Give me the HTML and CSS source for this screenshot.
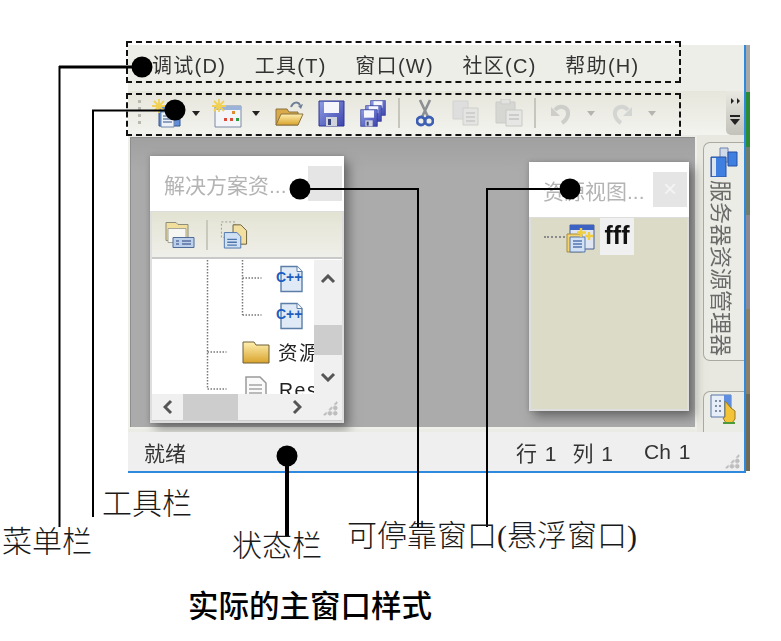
FILE: index.html
```html
<!DOCTYPE html>
<html lang="zh-CN">
<head>
<meta charset="utf-8">
<title>实际的主窗口样式</title>
<link rel="stylesheet" href="styles.css">
</head>
<body>
<svg class="defs" width="0" height="0" aria-hidden="true">
  <defs>
    <linearGradient id="gBlue" x1="0" y1="0" x2="1" y2="1"><stop offset="0" stop-color="#8f9fe6"/><stop offset="1" stop-color="#3d44ad"/></linearGradient>
    <linearGradient id="gFold" x1="0" y1="0" x2="0" y2="1"><stop offset="0" stop-color="#fff0b0"/><stop offset="1" stop-color="#d9a32c"/></linearGradient>
    <symbol id="cpp" viewBox="0 0 28 28">
      <path d="M5 1.500h16l5 5v20H5z" fill="#dfeaf6" stroke="#5b7ea8" stroke-width="1.400"/>
      <path d="M21 1.500v5h5" fill="#fff" stroke="#5b7ea8" stroke-width="1"/>
      <text x="0" y="17" class="cpp-text">C++</text>
    </symbol>
    <symbol id="floppy" viewBox="0 0 27 27">
      <path d="M1 1h25v25H1z" fill="url(#gBlue)" stroke="#2d3590"/>
      <path d="M6 2h15v11H6z" fill="#f4f6fb"/>
      <path d="M8 17h11v9H8z" fill="#cfd3dc"/>
      <path d="M10 19h3v6h-3z" fill="#39457a"/>
    </symbol>
  </defs>
</svg>

<main class="app">
  <nav class="menubar">
    <span class="menu-item">调试(D)</span>
    <span class="menu-item">工具(T)</span>
    <span class="menu-item">窗口(W)</span>
    <span class="menu-item">社区(C)</span>
    <span class="menu-item">帮助(H)</span>
  </nav>

  <div class="toolbar">
    <span class="grip"></span>
    <svg class="ic ic-new" viewBox="0 0 30 30"><path d="M7 8h21v20H7z" fill="#5f8fd8" stroke="#35558f"/><path d="M9 14h13v15H9z" fill="#eef2f8" stroke="#6d86aa"/><path d="M11 18h9M11 21h9M11 24h9" stroke="#6d86aa" stroke-width="1.400"/><path d="M7 1v14M0 8h14M2 3l10 10M12 3L2 13" stroke="#f2d054" stroke-width="1.800"/></svg>
    <span class="drop"></span>
    <svg class="ic ic-add" viewBox="0 0 30 30"><path d="M3 8h26v21H3z" fill="#f3f5f8" stroke="#7c8aa5"/><path d="M3 8h26v4H3z" fill="#9bb2d9"/><path d="M20 13h3v3h-3z" fill="#e08b32"/><path d="M12 20h3v3h-3z" fill="#d94c3a"/><path d="M18 20h3v3h-3z" fill="#d94c3a"/><path d="M24 20h3v3h-3z" fill="#2f9a3f"/><path d="M7 1v13M0 8h14M2 3l10 10M12 3L2 13" stroke="#f2d054" stroke-width="1.800"/></svg>
    <span class="drop drop-b"></span>
    <svg class="ic ic-open" viewBox="0 0 30 28"><path d="M2 10h11l2 3h9v13H2z" fill="#d9a94a" stroke="#8a7240"/><path d="M2 26l5-11h22l-5 11z" fill="url(#gFold)" stroke="#8a7240"/><path d="M17 8c2-5 7-6 9-2" fill="none" stroke="#6f7f96" stroke-width="2"/><path d="M29 5l-2 5-3-3z" fill="#6f7f96"/></svg>
    <svg class="ic ic-save"><use href="#floppy"/></svg>
    <svg class="ic ic-all" viewBox="0 0 27 27"><use href="#floppy" x="10" y="0" width="16" height="16"/><use href="#floppy" x="5" y="5" width="17" height="17"/><use href="#floppy" x="0" y="9" width="18" height="18"/></svg>
    <span class="sep"></span>
    <svg class="ic ic-cut" viewBox="0 0 18 28"><path d="M4 1l8 17M14 1L6 18" stroke="#8c8f94" stroke-width="2.600"/><circle cx="5" cy="22" r="4" fill="none" stroke="#3d5fb4" stroke-width="2.800"/><circle cx="13" cy="22" r="4" fill="none" stroke="#3d5fb4" stroke-width="2.800"/></svg>
    <svg class="ic ic-copy" viewBox="0 0 30 26"><path d="M2 1h15v18H2z" fill="#dedede" stroke="#d2d2d0"/><path d="M12 8h15v17H12z" fill="#e4e4e2" stroke="#cfcfcc"/><path d="M15 13h9M15 17h9M15 21h9" stroke="#c8c8c6" stroke-width="1.500"/></svg>
    <svg class="ic ic-paste" viewBox="0 0 30 28"><path d="M2 3h19v21H2z" fill="#d6d6d3" stroke="#cbcbc8"/><path d="M7 0h9v5H7z" fill="#e2e2df" stroke="#cbcbc8"/><path d="M12 11h16v16H12z" fill="#e6e6e4" stroke="#c8c8c5"/><path d="M15 16h10M15 20h10" stroke="#c4c4c0" stroke-width="1.500"/></svg>
    <span class="sep sep-b"></span>
    <svg class="ic ic-undo" viewBox="0 0 22 24"><path d="M1 6v9h9z" fill="#cdcdca"/><path d="M5 9c5-6 14-3 13 5-1 4-3 6-6 8" fill="none" stroke="#cdcdca" stroke-width="4"/></svg>
    <span class="drop off-drop"></span>
    <svg class="ic ic-redo" viewBox="0 0 22 24"><path d="M21 6v9h-9z" fill="#d3d5d3"/><path d="M17 9C12 3 3 6 4 14c1 4 3 6 6 8" fill="none" stroke="#d3d5d3" stroke-width="4"/></svg>
    <span class="drop off-drop drop-c"></span>
    <div class="overflow">
      <span class="chev"></span>
      <span class="chev chev-b"></span>
      <span class="overflow-bar"></span>
      <span class="overflow-tri"></span>
    </div>
  </div>

  <div class="workarea">
    <section class="client">
      <article class="float float-sln">
        <header class="float-head">
          <span class="float-title">解决方案资...</span>
          <span class="float-btn"></span>
        </header>
        <div class="sln-tools">
          <svg class="tool-ic" viewBox="0 0 30 28"><path d="M1 2h10l2 2h10v16H1z" fill="#f1dd9c" stroke="#8d8d7c"/><path d="M3 8h18v14H3z" fill="#f6f6f2" stroke="#a5a598"/><path d="M8 17h21v10H8z" fill="#bcd0ea" stroke="#4e6b9c"/><path d="M11 20h3v1h-3zM11 23h3v1h-3zM17 20h9v1h-9zM17 23h9v1h-9z" fill="#24417c"/></svg>
          <span class="tool-sep"></span>
          <svg class="tool-ic" viewBox="0 0 30 30"><path d="M2 2h14v16H2z" fill="none" stroke="#999" stroke-dasharray="2 2"/><path d="M14 5h8l6 6v14H14z" fill="#f3dfa0" stroke="#6a5f3c"/><path d="M5 13h13l4 4v12H5z" fill="#cfe0f3" stroke="#4f74ac"/><path d="M8 20h10M8 23h10M8 26h10" stroke="#4f74ac" stroke-width="1.400"/></svg>
        </div>
        <div class="sln-body">
          <div class="tree">
            <svg class="guides" width="162" height="132"><path d="M55.500 0v129M55.500 129h19M55.500 92h19M90.500 0v55M90.500 18h19M90.500 55h19" fill="none" stroke="#777" stroke-dasharray="1.500 1.500" stroke-width="1.500"/></svg>
            <div class="row row-cpp"><svg class="ic-cpp"><use href="#cpp"/></svg></div>
            <div class="row row-cpp"><svg class="ic-cpp"><use href="#cpp"/></svg></div>
            <div class="row row-file">
              <svg class="ic-file" viewBox="0 0 28 23"><path d="M1 4V1h11l2 3h13v18H1z" fill="url(#gFold)" stroke="#6d5f37"/></svg>
              <span class="file-name">资源</span>
            </div>
            <div class="row row-file">
              <svg class="ic-file ic-doc" viewBox="0 0 24 28"><path d="M2 1h14l6 6v20H2z" fill="#fafafa" stroke="#9a9a9a" stroke-width="1.500"/><path d="M5 9h13M5 13h13M5 17h13M5 21h13" stroke="#a5a5a5" stroke-width="1.500"/></svg>
              <span class="file-name">Res</span>
            </div>
          </div>
          <div class="vscroll">
            <svg class="arrow" viewBox="0 0 16 10"><path d="M2 8l6-6 6 6" fill="none" stroke="#555" stroke-width="3"/></svg>
            <span class="vthumb"></span>
            <svg class="arrow arrow-down" viewBox="0 0 16 10"><path d="M2 2l6 6 6-6" fill="none" stroke="#555" stroke-width="3"/></svg>
          </div>
        </div>
        <div class="hscroll">
          <svg class="arrow-h" viewBox="0 0 10 16"><path d="M8 2L2 8l6 6" fill="none" stroke="#555" stroke-width="3"/></svg>
          <span class="hthumb"></span>
          <svg class="arrow-h arrow-r" viewBox="0 0 10 16"><path d="M2 2l6 6-6 6" fill="none" stroke="#555" stroke-width="3"/></svg>
          <span class="sizegrip"></span>
        </div>
      </article>

      <article class="float float-res">
        <header class="float-head">
          <span class="float-title">资源视图...</span>
          <span class="float-btn float-x">×</span>
        </header>
        <div class="res-body">
          <span class="res-dots"></span>
          <svg class="res-ic" viewBox="0 0 30 30"><path d="M5 2h24v24H5z" fill="#dfe6f2" stroke="#475c96"/><path d="M5 2h24v5H5z" fill="#3c62c4"/><path d="M2 11h15v18H2z" fill="#f4d36e" stroke="#a98d3c"/><path d="M5 14h15v15H5z" fill="#d3e1f4" stroke="#5476ae"/><path d="M8 18h9M8 21h9M8 24h9" stroke="#5476ae" stroke-width="1.400"/><path d="M16 5v9M12 9.500h9M24 9v8M20 13h8" stroke="#f1cf3c" stroke-width="2.400"/></svg>
          <span class="res-name">fff</span>
        </div>
      </article>
    </section>

    <aside class="sidebar">
      <div class="tab tab-server">
        <svg class="tab-ic" viewBox="0 0 28 30"><path d="M10 1h8v14h-8z" fill="#cfd9ea" stroke="#6c83ad"/><path d="M18 5h9v14h-9z" fill="#3f7fe0" stroke="#27509e"/><path d="M1 10h15v20H1z" fill="#3f7fe0" stroke="#27509e"/><path d="M2 11h4v18H2z" fill="#dbe4ee"/></svg>
        <span class="tab-text">服务器资源管理器</span>
      </div>
      <div class="tab tab-tool">
        <svg class="tab-ic2" viewBox="0 0 28 32"><path d="M1 2h20v22H1z" fill="#e8eef7" stroke="#5574a8"/><path d="M14 2h7v22h-7z" fill="#5f8ee0"/><path d="M5 7h2v2H5zM9 7h2v2H9zM5 12h2v2H5zM9 12h2v2H9zM5 17h2v2H5zM9 17h2v2H9z" fill="#7d8ea8"/><path d="M15 8l6 7 4 3v8l-3 4h-6l-3-5 2-1z" fill="#f3c338" stroke="#9a7a1d"/><path d="M13 29h12v2H13z" fill="#4d9a3a"/></svg>
      </div>
    </aside>
  </div>

  <footer class="statusbar">
    <span class="status-ready">就绪</span>
    <span class="status-cell status-line">行 1</span>
    <span class="status-cell status-col">列 1</span>
    <span class="status-cell status-ch">Ch 1</span>
    <span class="sizegrip sizegrip-main"></span>
  </footer>
  <span class="edge"></span>
  <span class="backdrop"></span>
</main>

<div class="dash dash-menu"></div>
<div class="dash dash-tool"></div>

<svg class="callouts" width="781" height="641" aria-hidden="true">
  <g fill="none" stroke="#000">
    <path d="M142 67H59.500V527" stroke-width="2"/>
    <path d="M59 67h83" stroke-width="3"/>
    <path d="M175 110.500H93V517" stroke-width="2"/>
    <path d="M287 456v80" stroke-width="4"/>
    <path d="M300 189h118v338" stroke-width="2"/>
    <path d="M570 189h-83v338" stroke-width="2"/>
  </g>
  <g fill="#000">
    <circle cx="142" cy="67" r="10.500"/>
    <circle cx="175" cy="110" r="10.500"/>
    <circle cx="287" cy="456" r="10.500"/>
    <circle cx="300" cy="189" r="10.500"/>
    <circle cx="570" cy="189" r="10.500"/>
  </g>
</svg>

<span class="label label-menu">菜单栏</span>
<span class="label label-tool">工具栏</span>
<span class="label label-status">状态栏</span>
<span class="label label-dock">可停靠窗口(悬浮窗口)</span>
<h1 class="caption">实际的主窗口样式</h1>
</body>
</html>
```

FILE: styles.css
```css
* { box-sizing: border-box; }
html, body { margin: 0; padding: 0; }
body {
  width: 781px;
  height: 641px;
  position: relative;
  overflow: hidden;
  background: #fff;
  font-family: "Liberation Sans", "Noto Sans CJK SC", sans-serif;
}
.defs { position: absolute; }
.app {
  position: absolute;
  left: 128px;
  top: 45px;
  width: 618px;
  height: 428px;
  display: flex;
  flex-direction: column;
  background: #ececE6;
  color: #333;
  border-bottom: 2px solid #2f8ade;
}
.edge {
  position: absolute;
  right: 0;
  top: 0;
  bottom: -2px;
  width: 2px;
  background: #2f8ade;
}
.backdrop {
  position: absolute;
  left: 100%;
  top: 0;
  bottom: 0;
  width: 4px;
  background: linear-gradient(#a8a8a6 0 11%, #2b8a33 11% 24%, #6f7f6c 24% 40%, #8f8a92 40% 62%, #8c8066 62% 82%, #6f6a55 82%);
}

/* menu */
.menubar {
  height: 46px;
  flex: none;
  display: flex;
  align-items: center;
  padding: 0 0 8px 24px;
  background: #eeeee9;
  font-size: 20px;
  letter-spacing: 1.300px;
  filter: blur(.4px);
}
.menu-item { margin-right: 28.500px; white-space: nowrap; }

/* toolbar */
.toolbar {
  height: 44px;
  flex: none;
  display: flex;
  align-items: center;
  position: relative;
  background: linear-gradient(#e6e6dc, #f3f3ef);
  filter: blur(.4px);
}
.grip {
  width: 3px;
  height: 26px;
  margin-left: 10px;
  background: repeating-linear-gradient(#b9b9b0 0 3px, transparent 3px 7px);
}
.ic { display: block; flex: none; }
.ic-new { width: 30px; height: 30px; margin-left: 11px; }
.drop {
  width: 0;
  height: 0;
  flex: none;
  border: 4.500px solid transparent;
  border-top: 5px solid #222;
  border-bottom: 0;
  margin-left: 10px;
}
.ic-add { width: 30px; height: 30px; margin-left: 12px; }
.drop-b { margin-left: 10px; }
.ic-open { width: 30px; height: 28px; margin-left: 14px; }
.ic-save { width: 27px; height: 27px; margin-left: 14px; }
.ic-all { width: 27px; height: 27px; margin-left: 15px; }
.sep { width: 2px; height: 30px; background: #c6c6bc; flex: none; margin-left: 11px; }
.ic-cut { width: 18px; height: 28px; margin-left: 16px; }
.ic-copy { width: 30px; height: 26px; margin-left: 17px; }
.ic-paste { width: 30px; height: 28px; margin-left: 13px; }
.sep-b { margin-left: 10px; }
.ic-undo { width: 22px; height: 24px; margin-left: 14px; }
.off-drop { border-top-color: #b4b4b0; margin-left: 15px; }
.ic-redo { width: 22px; height: 24px; margin-left: 16px; }
.drop-c { margin-left: 15px; }
.overflow {
  position: absolute;
  right: 2px;
  top: 0;
  width: 18px;
  height: 44px;
  background: linear-gradient(#e9e9e2, #d0d0c8 60%, #c3c3bb);
  border-radius: 0 0 0 5px;
}
.chev {
  position: absolute;
  left: 5px;
  top: 7px;
  border: 3px solid transparent;
  border-left: 3px solid #222;
  border-right: 0;
}
.chev-b { left: 11px; }
.overflow-bar {
  position: absolute;
  left: 4px;
  top: 24px;
  width: 10px;
  height: 2px;
  background: #222;
}
.overflow-tri {
  position: absolute;
  left: 4px;
  top: 28px;
  border: 5px solid transparent;
  border-top: 6px solid #222;
  border-bottom: 0;
}

/* workarea */
.workarea {
  flex: 1;
  display: flex;
  min-height: 0;
}
.client {
  position: relative;
  width: 569px;
  margin-top: 2px;
  margin-bottom: 3px;
  background: linear-gradient(#a0a0a0, #ababab 12%);
  border-left: 2px solid #f0f0ea;
  border-right: 2px solid #f0f0ea;
  border-bottom: 2px solid #f0f0ea;
  box-shadow: inset 0 1px 0 #8f8f8f, inset 1px 0 0 #8f8f8f;
}
.sidebar {
  flex: 1;
  padding: 7px 2px 0 6px;
  display: flex;
  flex-direction: column;
  background: #e8e8e1;
}
.tab {
  border: 1px solid #a9a9a0;
  border-right: 0;
  border-radius: 7px 0 0 7px;
  background: #ecece6;
  display: flex;
  flex-direction: column;
  align-items: center;
  filter: blur(.3px);
}
.tab-server { height: 219px; padding-top: 4px; flex: none; }
.tab-ic { width: 28px; height: 30px; flex: none; }
.tab-text {
  writing-mode: vertical-rl;
  text-orientation: sideways;
  font-size: 22px;
  line-height: 24px;
  margin: 3px 8px 0 0;
  white-space: nowrap;
  color: #6a6a6a;
}
.tab-tool { margin-top: 30px; flex: 1; padding-top: 1px; border-bottom: 0; border-radius: 7px 0 0 0; }
.tab-ic2 { width: 28px; height: 32px; }

/* floating windows */
.float {
  position: absolute;
  display: flex;
  flex-direction: column;
  background: #f0f0f0;
  border: 2px solid #dedede;
  border-top: 0;
  box-shadow: 5px 6px 10px rgba(60, 60, 60, .55), 0 0 4px rgba(70, 70, 70, .3);
}
.float-sln { left: 20px; top: 19px; width: 194px; height: 267px; }
.float-res { left: 399px; top: 25px; width: 160px; height: 249px; }
.float-head {
  height: 56px;
  flex: none;
  margin: 0 -2px;
  padding: 0 2px 0 14px;
  background: #fff;
  display: flex;
  align-items: center;
  justify-content: space-between;
  border-bottom: 1px solid #ddd;
}
.float-title {
  font-size: 21px;
  color: #b4b4b4;
  white-space: nowrap;
  filter: blur(.4px);
}
.float-btn {
  width: 34px;
  height: 35px;
  flex: none;
  background: #e5e5e5;
  color: #f4f4f4;
  font-size: 24px;
  line-height: 34px;
  text-align: center;
}
.sln-tools {
  height: 47px;
  flex: none;
  display: flex;
  align-items: center;
  padding-left: 13px;
  background: linear-gradient(#e3e3d3, #efefea);
  border-bottom: 2px solid #c9c9c9;
}
.tool-ic { width: 30px; height: 29px; flex: none; filter: blur(.3px); }
.tool-sep { width: 2px; height: 30px; background: #c8c8bc; margin: 0 11px; flex: none; }
.sln-body { height: 135px; flex: none; display: flex; padding-top: 1px; background: #fff; }
.tree {
  position: relative;
  width: 162px;
  flex: none;
  overflow: hidden;
  background: #fff;
}
.guides { position: absolute; left: 0; top: 0; }
.row {
  position: relative;
  height: 37px;
  display: flex;
  align-items: center;
}
.row-cpp { padding-left: 124px; }
.row-file { padding-left: 90px; gap: 8px; color: #222; }
.ic-cpp { width: 28px; height: 28px; }
.cpp-text { font: bold 14px "Liberation Sans", sans-serif; fill: #1d5cc0; }
.ic-file { width: 28px; height: 23px; flex: none; filter: blur(.3px); }
.ic-doc { width: 24px; height: 28px; margin: 0 3px 0 2px; }
.file-name {
  font-size: 19.500px;
  line-height: 24px;
  letter-spacing: 1.500px;
  white-space: nowrap;
  filter: blur(.3px);
}
.vscroll {
  flex: 1;
  display: flex;
  flex-direction: column;
  align-items: center;
  background: #f0f0f0;
  position: relative;
}
.arrow { width: 16px; height: 10px; margin-top: 14px; flex: none; }
.vthumb { width: 100%; height: 30px; margin-top: 41px; background: #cdcdcd; flex: none; }
.arrow-down { margin-top: 17px; }
.hscroll {
  flex: 1;
  display: flex;
  align-items: center;
  position: relative;
  background: #f0f0f0;
  border-bottom: 1px solid #cfcfcf;
}
.arrow-h { width: 10px; height: 16px; margin-left: 11px; flex: none; }
.hthumb { width: 55px; height: 100%; margin-left: 10px; background: #cdcdcd; flex: none; }
.arrow-r { margin-left: 54px; }
.sizegrip {
  position: absolute;
  right: 4px;
  bottom: 4px;
  width: 16px;
  height: 16px;
  background:
    radial-gradient(circle, #bdbdbd 2px, transparent 2.500px) 0 0 / 5.300px 5.300px;
  clip-path: polygon(100% 0, 100% 100%, 0 100%);
}
.res-body {
  flex: 1;
  position: relative;
  background: #dcdbc7;
  display: flex;
  align-items: flex-start;
  padding: 5px 0 0 13px;
}
.res-dots {
  width: 21px;
  margin-top: 13px;
  border-top: 2px dotted #8b8b8b;
  flex: none;
}
.res-ic { width: 30px; height: 30px; flex: none; filter: blur(.3px); }
.res-name {
  margin: -5px 0 0 5px;
  width: 34px;
  height: 37px;
  background: #f0f0f0;
  font: bold 25px/35px "Liberation Sans", sans-serif;
  color: #111;
  text-align: center;
  filter: blur(.3px);
}

/* status bar */
.statusbar {
  height: 39px;
  flex: none;
  position: relative;
  display: flex;
  align-items: center;
  padding-left: 16px;
  background: #efefef;
  font-size: 21px;
  color: #333;
  filter: blur(.4px);
}
.status-cell { white-space: nowrap; word-spacing: 2px; }
.status-line { margin-left: 330px; }
.status-col { margin-left: 16px; }
.status-ch { margin-left: 31px; }
.sizegrip-main { right: 6px; bottom: 2px; }

/* annotations */
.dash {
  position: absolute;
  left: 126px;
  width: 555px;
  border: 2px dashed #111;
}
.dash-menu { top: 41px; height: 42px; }
.dash-tool { top: 93px; height: 43px; }
.callouts { position: absolute; left: 0; top: 0; }
.label {
  position: absolute;
  font-family: "Liberation Serif", "Noto Sans CJK SC", serif;
  font-size: 30px;
  line-height: 36px;
  font-weight: 300;
  color: #1a1a1a;
  white-space: nowrap;
}
.label-menu { left: 2px; top: 524px; }
.label-tool { left: 102px; top: 486px; }
.label-status { left: 232px; top: 528px; }
.label-dock { left: 347px; top: 518px; }
.caption {
  position: absolute;
  left: 188px;
  top: 589px;
  margin: 0;
  font-family: "Liberation Serif", "Noto Sans CJK SC", serif;
  font-size: 30.500px;
  line-height: 36px;
  font-weight: 500;
  color: #000;
  white-space: nowrap;
}
```
